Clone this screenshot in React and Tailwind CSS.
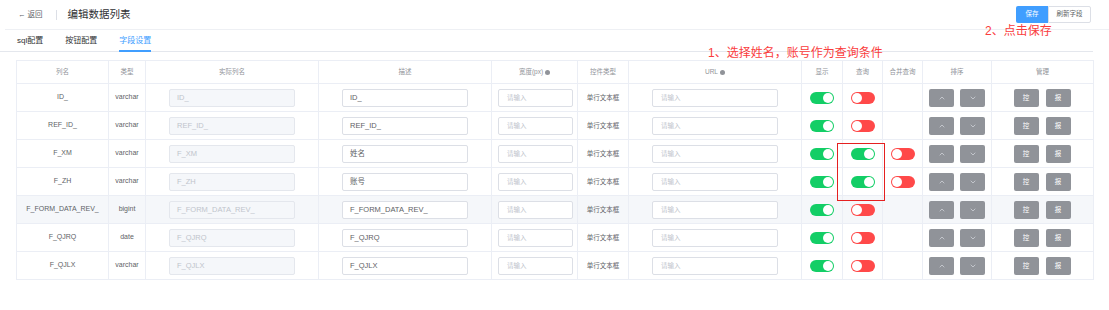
import React from 'react';
import { ChevronUp, ChevronDown } from 'lucide-react';

const cols = [92, 37, 173, 173, 86, 51, 173, 41, 40, 40, 69, 102];

const rows = [
    { name: 'ID_', type: 'varchar', desc: 'ID_', show: true, query: false, merge: null },
    { name: 'REF_ID_', type: 'varchar', desc: 'REF_ID_', show: true, query: false, merge: null },
    { name: 'F_XM', type: 'varchar', desc: '姓名', show: true, query: true, merge: false },
    { name: 'F_ZH', type: 'varchar', desc: '账号', show: true, query: true, merge: false },
    { name: 'F_FORM_DATA_REV_', type: 'bigint', desc: 'F_FORM_DATA_REV_', show: true, query: false, merge: null, hover: true },
    { name: 'F_QJRQ', type: 'date', desc: 'F_QJRQ', show: true, query: false, merge: null },
    { name: 'F_QJLX', type: 'varchar', desc: 'F_QJLX', show: true, query: false, merge: null },
];

const Toggle = ({ on }) => (
    <div className={`mx-auto w-[24px] h-[12px] rounded-full flex items-center px-[1px] ${on ? 'bg-[#13ce66] justify-end' : 'bg-[#ff4949] justify-start'}`}>
        <div className="w-[10px] h-[10px] rounded-full bg-white" />
    </div>
);

const Info = () => (
    <span className="inline-flex items-center justify-center w-[5px] h-[5px] rounded-full bg-[#909399] ml-[2px] align-middle" />
);

const GrayBtn = ({ children }) => (
    <div className="w-[25px] h-[18px] rounded-[2px] bg-[#909399] flex items-center justify-center text-white text-[6.5px]">
        {children}
    </div>
);

const headers = ['列名', '类型', '实际列名', '描述', '宽度(px)', '控件类型', 'URL', '显示', '查询', '合并查询', '排序', '管理'];

export default function App() {
    return (
        <div className="relative w-[1109px] h-[310px] bg-white overflow-hidden font-['Liberation_Sans','Noto_Sans_CJK_SC',sans-serif] text-[#606266]">
            {/* Top bar */}
            <div className="ml-[5px] h-[30px] flex items-center justify-between border-b border-[#eef0f4] pl-[13px] pr-[18px]">
                <div className="flex items-center">
                    <span className="text-[7.5px] text-[#606266]">← 返回</span>
                    <span className="w-px h-[10px] bg-[#dcdfe6] ml-[13px] mr-[11px]" />
                    <span className="text-[10.5px] text-[#303133]">编辑数据列表</span>
                </div>
                <div className="flex items-center mb-[1px]">
                    <div className="w-[32px] h-[17px] bg-[#409eff] text-white text-[6.5px] flex items-center justify-center rounded-l-[2px]">保存</div>
                    <div className="w-[43px] h-[17px] border border-[#dcdfe6] text-[#606266] text-[6.5px] flex items-center justify-center rounded-r-[2px]">刷新字段</div>
                </div>
            </div>

            {/* Tabs */}
            <div className="mr-[16px] h-[22px] pl-[17px] flex items-stretch gap-[22px] border-b border-[#e4e7ed]">
                <div className="flex items-center text-[8px] text-[#303133]">sql配置</div>
                <div className="flex items-center text-[8px] text-[#303133]">按钮配置</div>
                <div className="flex items-center text-[8px] text-[#409eff] border-b-2 border-[#409eff] pt-[2px] -mb-px">字段设置</div>
            </div>

            {/* Table */}
            <table className="ml-[16px] mt-[8px] table-fixed border-collapse border-l border-t border-[#ebeef5]">
                <colgroup>
                    {cols.map((w, i) => (
                        <col key={i} style={{ width: w }} />
                    ))}
                </colgroup>
                <thead>
                    <tr className="h-[23px]">
                        {headers.map((h, i) => (
                            <th key={i} className="p-0 border-r border-b border-[#ebeef5] text-[6.5px] font-normal text-[#909399] text-center">
                                {h}
                                {(i === 4 || i === 6) && <Info />}
                            </th>
                        ))}
                    </tr>
                </thead>
                <tbody>
                    {rows.map((r, i) => (
                        <tr key={i} className={`h-[28px] ${r.hover ? 'bg-[#f5f7fa]' : 'bg-white'}`}>
                            <td className="p-0 border-r border-b border-[#ebeef5] text-center text-[7px]">{r.name}</td>
                            <td className="p-0 border-r border-b border-[#ebeef5] text-center text-[7px]">{r.type}</td>
                            <td className="p-0 border-r border-b border-[#ebeef5]">
                                <div className="mx-auto w-[126px] h-[18px] rounded-[2px] border border-[#e4e7ed] bg-[#f5f7fa] text-[#c0c4cc] text-[7.5px] flex items-center px-[7px]">
                                    {r.name}
                                </div>
                            </td>
                            <td className="p-0 border-r border-b border-[#ebeef5]">
                                <div className="mx-auto w-[126px] h-[18px] rounded-[2px] border border-[#dcdfe6] bg-white text-[#606266] text-[7.5px] flex items-center px-[7px]">
                                    {r.desc}
                                </div>
                            </td>
                            <td className="p-0 border-r border-b border-[#ebeef5]">
                                <div className="ml-[6px] w-[75px] h-[18px] rounded-[2px] border border-[#dcdfe6] bg-white text-[#c0c4cc] text-[6.5px] flex items-center px-[8px]">
                                    请输入
                                </div>
                            </td>
                            <td className="p-0 border-r border-b border-[#ebeef5] text-center text-[6.5px] text-[#606266]">单行文本框</td>
                            <td className="p-0 border-r border-b border-[#ebeef5]">
                                <div className="mx-auto w-[126px] h-[18px] rounded-[2px] border border-[#dcdfe6] bg-white text-[#c0c4cc] text-[6.5px] flex items-center px-[8px]">
                                    请输入
                                </div>
                            </td>
                            <td className="p-0 border-r border-b border-[#ebeef5]"><Toggle on={r.show} /></td>
                            <td className="p-0 border-r border-b border-[#ebeef5]"><Toggle on={r.query} /></td>
                            <td className="p-0 border-r border-b border-[#ebeef5]">{r.merge !== null && <Toggle on={r.merge} />}</td>
                            <td className="p-0 border-r border-b border-[#ebeef5]">
                                <div className="flex justify-center gap-[6px]">
                                    <GrayBtn><ChevronUp size={8} strokeWidth={2} className="text-[#dcdfe6]" /></GrayBtn>
                                    <GrayBtn><ChevronDown size={8} strokeWidth={2} className="text-[#dcdfe6]" /></GrayBtn>
                                </div>
                            </td>
                            <td className="p-0 border-r border-b border-[#ebeef5]">
                                <div className="flex justify-center gap-[7px] pr-[1px]">
                                    <GrayBtn>控</GrayBtn>
                                    <GrayBtn>报</GrayBtn>
                                </div>
                            </td>
                        </tr>
                    ))}
                </tbody>
            </table>

            {/* Annotations */}
            <div className="absolute left-[708px] top-[45px] text-[12px] leading-[16px] text-[#fa3c3c] whitespace-nowrap">1、选择姓名，账号作为查询条件</div>
            <div className="absolute left-[985px] top-[23px] text-[12px] leading-[16px] text-[#fa3c3c] whitespace-nowrap">2、点击保存</div>
            <div className="absolute left-[837px] top-[143px] w-[48px] h-[58px] border-[1.5px] border-[#e52020]" />
        </div>
    );
}
